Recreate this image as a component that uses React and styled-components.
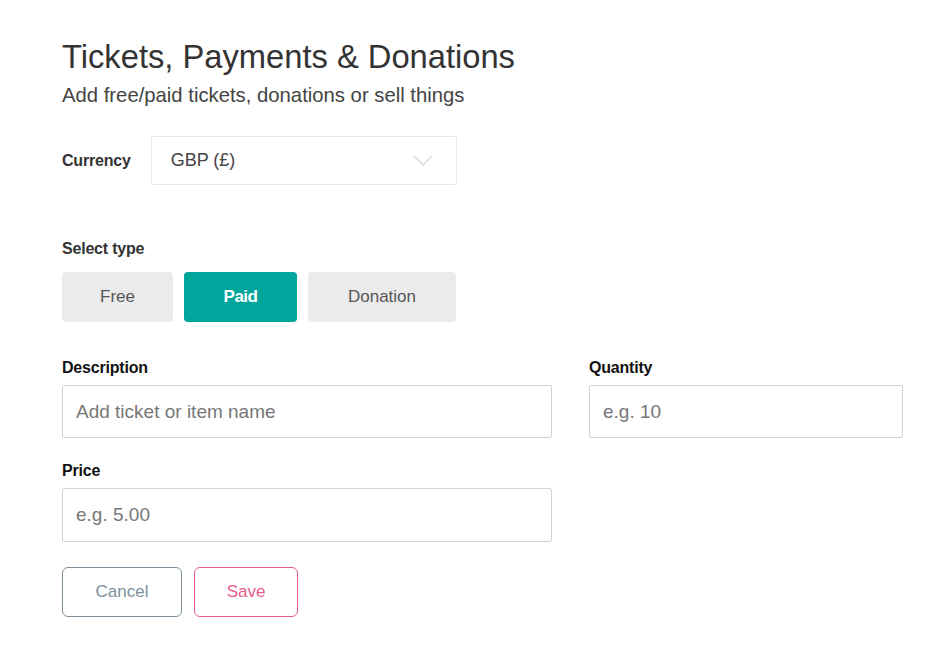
import React from "react";
import styled, { createGlobalStyle } from "styled-components";

const GlobalStyle = createGlobalStyle`
  body {
    margin: 0;
    background: #fff;
    font-family: "Liberation Sans", Arial, sans-serif;
  }
`;

const Page = styled.div`
  padding: 37px 0 0 62px;
  width: 841px;
`;

const Title = styled.h1`
  margin: 0;
  font-size: 32.7px;
  font-weight: 400;
  line-height: 40px;
  color: #333;
`;

const Subtitle = styled.p`
  margin: 6px 0 0;
  font-size: 20.3px;
  line-height: 24px;
  color: #444;
`;

const CurrencyRow = styled.div`
  display: flex;
  align-items: center;
  gap: 20px;
  margin-top: 29px;
`;

const Label = styled.label`
  display: block;
  font-size: 16px;
  font-weight: 700;
  color: ${(p) => (p.$dark ? "#111" : "#333")};
  line-height: 20px;
  letter-spacing: -0.2px;
`;

const Select = styled.div`
  width: 306px;
  height: 49px;
  box-sizing: border-box;
  border: 1px solid #e8e8e8;
  border-radius: 2px;
  display: flex;
  align-items: center;
  justify-content: space-between;
  padding: 0 23px 0 19px;
  font-size: 18px;
  color: #444;
`;

const TypeSection = styled.div`
  margin-top: 54px;
`;

const TypeGroup = styled.div`
  display: flex;
  gap: 11px;
  margin-top: 13px;
`;

const TypeButton = styled.button`
  width: ${(p) => p.$w}px;
  height: 50px;
  border: none;
  border-radius: 4px;
  font-family: inherit;
  font-size: 17px;
  background: ${(p) => (p.$active ? "#00a69c" : "#ebebeb")};
  color: ${(p) => (p.$active ? "#fff" : "#555")};
  font-weight: ${(p) => (p.$active ? 700 : 400)};
  letter-spacing: ${(p) => (p.$active ? "-0.5px" : "0")};
`;

const FieldGrid = styled.div`
  display: grid;
  grid-template-columns: 490px 314px;
  column-gap: 37px;
  row-gap: 23px;
  margin-top: 36px;
`;

const Field = styled.div`
  display: flex;
  flex-direction: column;
  gap: 7px;
`;

const Input = styled.input`
  box-sizing: border-box;
  width: 100%;
  height: ${(p) => p.$h || 53}px;
  border: 1px solid #d2d2d2;
  border-radius: 2px;
  padding: 0 13px;
  font-family: inherit;
  font-size: 19px;
  color: #333;
  outline: none;
  &::placeholder {
    color: #777;
  }
`;

const Actions = styled.div`
  display: flex;
  gap: 12px;
  margin-top: 25px;
`;

const OutlineButton = styled.button`
  width: ${(p) => p.$w}px;
  height: 50px;
  background: #fff;
  border: 1px solid ${(p) => p.$color};
  border-radius: 6px;
  color: ${(p) => p.$color};
  font-family: inherit;
  font-size: 17px;
`;

const Chevron = () => (
  <svg width="20" height="11" viewBox="0 0 20 11" fill="none">
    <path d="M1 1l9 9 9-9" stroke="#e3e3e8" strokeWidth="2" />
  </svg>
);

export default function App() {
  return (
    <>
      <GlobalStyle />
      <Page>
        <Title>Tickets, Payments &amp; Donations</Title>
        <Subtitle>Add free/paid tickets, donations or sell things</Subtitle>
        <CurrencyRow>
          <Label>Currency</Label>
          <Select>
            <span>GBP (£)</span>
            <Chevron />
          </Select>
        </CurrencyRow>
        <TypeSection>
          <Label>Select type</Label>
          <TypeGroup>
            <TypeButton $w={111}>Free</TypeButton>
            <TypeButton $w={113} $active>
              Paid
            </TypeButton>
            <TypeButton $w={148}>Donation</TypeButton>
          </TypeGroup>
        </TypeSection>
        <FieldGrid>
          <Field>
            <Label $dark>Description</Label>
            <Input $h={53} placeholder="Add ticket or item name" />
          </Field>
          <Field>
            <Label $dark>Quantity</Label>
            <Input $h={53} placeholder="e.g. 10" />
          </Field>
          <Field>
            <Label $dark>Price</Label>
            <Input $h={54} placeholder="e.g. 5.00" />
          </Field>
        </FieldGrid>
        <Actions>
          <OutlineButton $w={120} $color="#7d8f9b">
            Cancel
          </OutlineButton>
          <OutlineButton $w={104} $color="#ea5a8a">
            Save
          </OutlineButton>
        </Actions>
      </Page>
    </>
  );
}
